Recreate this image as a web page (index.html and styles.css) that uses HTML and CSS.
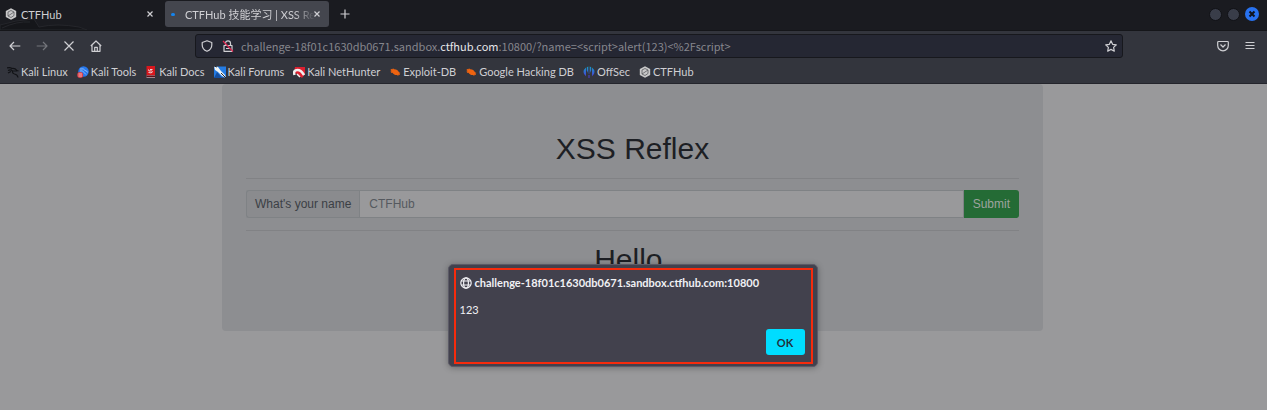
FILE: index.html
```html
<!DOCTYPE html>
<html lang="en">
<head>
    <meta charset="UTF-8">
    <meta name="viewport" content="width=device-width, initial-scale=1.0">
    <title>CTFHub 技能学习 | XSS Reflex</title>
    <link rel="stylesheet" href="styles.css">
</head>
<body>
    <svg class="sprite" aria-hidden="true">
        <symbol id="close" viewBox="0 0 12 12"><path d="M3.500 3.500l5 5M8.500 3.500l-5 5" /></symbol>
        <symbol id="hub" viewBox="0 0 12 12">
            <path d="M6 .2l5.200 2.700v6.200L6 11.800.8 9.100V2.900z" fill="#c9c9c9" />
            <path d="M3 4l3-1.500 3 1.500v3.500L6 9.500 3 8zM3 8l6-4" fill="none" stroke="#5b5c60" stroke-width=".8" />
        </symbol>
        <symbol id="bug" viewBox="0 0 12 12">
            <path d="M1.500 3l2 .3.5-1 1 1c2-.3 4 1 5 3l1.500.8-1 .5.5 1.500-1.500-.4-.3 1.200-1.200-.8C6 9.200 4.500 8.200 3.500 6.800L1.800 7l.7-1.200L1 5l1.300-.5z" fill="#ee6310" />
        </symbol>
    </svg>

    <header class="browser">
        <div class="tab-bar">
            <svg class="dragon" viewBox="0 0 120 12"><path d="M0 7Q15 2 34 1l5 8q18-4 40 0l8 3H0zM2 10q15-7 28-6" /></svg>
            <div class="tab">
                <svg class="icon"><use href="#hub" /></svg>
                <span class="tab-title">CTFHub</span>
                <button class="tab-close" aria-label="Close tab"><svg class="icon line"><use href="#close" /></svg></button>
            </div>
            <div class="tab active">
                <span class="loading"></span>
                <span class="tab-title fade">CTFHub 技能学习 | XSS Re</span>
                <button class="tab-close" aria-label="Close tab"><svg class="icon line"><use href="#close" /></svg></button>
            </div>
            <button class="new-tab" aria-label="New tab"><svg class="icon line" viewBox="0 0 12 12"><path d="M6 1.500v9M1.500 6h9" /></svg></button>
            <div class="window-buttons">
                <button class="win" aria-label="Minimize"></button>
                <button class="win" aria-label="Maximize"></button>
                <button class="win win-close" aria-label="Close"><svg viewBox="0 0 14 14"><path d="M4.500 4.500l5 5M9.500 4.500l-5 5" /></svg></button>
            </div>
        </div>

        <div class="nav-bar">
            <div class="nav-buttons">
                <button aria-label="Back"><svg class="icon line" viewBox="0 0 12 12"><path d="M11.300 6H1M5 2L1 6l4 4" /></svg></button>
                <button class="disabled" aria-label="Forward"><svg class="icon line" viewBox="0 0 12 12"><path d="M.7 6H11M7 2l4 4-4 4" /></svg></button>
                <button aria-label="Stop"><svg class="icon line" viewBox="0 0 12 12"><path d="M1.500 1.500l9 9M10.500 1.500l-9 9" /></svg></button>
                <button aria-label="Home"><svg class="icon line" viewBox="0 0 12 12"><path d="M.8 6L6 1l5.200 5M2 5v6.300h8V5M4.700 11V7.300h2.600V11" /></svg></button>
            </div>
            <div class="url-bar">
                <svg class="icon line" viewBox="0 0 12 12"><path d="M6 .8l4.800 1.700v2.500c0 3-2 5.200-4.800 6.300C3.200 10.200 1.200 8 1.200 5V2.500z" /></svg>
                <svg class="icon line lock" viewBox="0 0 12 12"><path d="M2 5.500h8v5.800H2zM3.500 5V3.300a2.500 2.500 0 0 1 5 0V5M4 8.500h4" /><path class="slash" d="M1 1l10 10.500" /></svg>
                <span class="url">challenge-18f01c1630db0671.sandbox.<b>ctfhub.com</b>:10800/?name=&lt;script&gt;alert(123)&lt;%2Fscript&gt;</span>
                <button aria-label="Bookmark"><svg class="icon line" viewBox="0 0 12 12"><path d="M6 .8l1.600 3.500 3.700.5-2.700 2.600.7 3.800L6 9.400l-3.300 1.800.7-3.800L.7 4.800l3.700-.5z" /></svg></button>
            </div>
            <div class="nav-menu">
                <button aria-label="Pocket"><svg class="icon line" viewBox="0 0 12 12"><path d="M1.500 1.500h9q.8 0 .8.8V5.500a5.300 5.300 0 0 1-10.600 0V2.300q0-.8.8-.8zM3.500 4.500L6 7l2.500-2.500" /></svg></button>
                <button aria-label="Menu"><svg class="icon line" viewBox="0 0 12 12"><path d="M1.500 2.500h9M1.500 5.500h9M1.500 8.500h9" /></svg></button>
            </div>
        </div>

        <nav class="bookmarks">
            <a href="#"><svg class="icon" viewBox="0 0 12 12"><path d="M0 2q3-1 5 .5 3-.5 5 2l1.500.5M1 4.500q3-1.500 4.500.5 3 0 4.500 0M5.500 5Q5 7.500 7.500 8q3 .3 3.500 3.500M1 7l3-1.500" fill="none" stroke="#111216" stroke-width="1.200" /></svg>Kali Linux</a>
            <a href="#"><svg class="icon" viewBox="0 0 12 12"><circle cx="6.500" cy="5.500" r="5.200" fill="#2678ee" /><path d="M3 3q4-1 5 1.500 2 0 2.500 2M3 5q3-1 4 1.500l2 2" fill="none" stroke="#a9ccf8" stroke-width=".8" /><circle cx="3.200" cy="9" r="3" fill="#df3e49" /><path d="M1.500 8h3.500M1.500 10h3.500" stroke="#eed" stroke-width=".7" /></svg>Kali Tools</a>
            <a href="#"><svg class="icon" viewBox="0 0 12 12"><path d="M1.500 0h8.500v9.500H1.500z" fill="#d9171d" /><path d="M1.500 9.500H10V12H1.500z" fill="#a5868e" /><path d="M1.500 10.500H10" stroke="#5c1018" /><path d="M3.500 3.500q0 2 1.500 1.500t2.500.5M3.500 6.500q3 1 4-.5M5 3.500h2.500" fill="none" stroke="#eee" stroke-width=".9" /></svg>Kali Docs</a>
            <a href="#"><svg class="icon" viewBox="0 0 12 12"><path d="M0 .5h12v11H0z" fill="#247ce4" /><path d="M0 12l3-6 5 6z" fill="#154fa0" /><path d="M0 0l4 1 3 4 4 4 1 3-4-2-4-4-3-2z" fill="#eef3f4" /><path d="M0 0l3 1M7 7l5 5" stroke="#26282f" fill="none" /></svg>Kali Forums</a>
            <a href="#"><svg class="icon" viewBox="0 0 12 12"><path d="M2 1h10v7L9 12 1 6z" fill="#dc2030" /><path d="M1.500 9Q0 4 4.500 4 8 4 11 9" fill="none" stroke="#f2eeee" stroke-width="2.500" /><path d="M4 8l3 3" fill="none" stroke="#f2eeee" stroke-width="1.500" /></svg>Kali NetHunter</a>
            <a href="#"><svg class="icon"><use href="#bug" /></svg>Exploit-DB</a>
            <a href="#"><svg class="icon"><use href="#bug" /></svg>Google Hacking DB</a>
            <a href="#"><svg class="icon" viewBox="0 0 12 12"><defs><linearGradient id="off" x2="0" y2="1"><stop stop-color="#159cc7" /><stop offset="1" stop-color="#5131d5" /></linearGradient></defs><path d="M5.300.5v8Q5 6 3.800 4.500V1.200zM6.700.5v8Q7 6 8.200 4.500V1.200zM3 1.500v8.700Q.5 8.500.5 6T3 1.500zM9 1.500v8.700Q11.500 8.500 11.500 6T9 1.500zM5.500 9h1v3h-1z" fill="url(#off)" /></svg>OffSec</a>
            <a href="#"><svg class="icon"><use href="#hub" /></svg>CTFHub</a>
        </nav>
    </header>

    <main class="page">
        <div class="jumbotron">
            <h1>XSS Reflex</h1>
            <hr>
            <form class="input-group">
                <label for="name">What's your name</label>
                <input type="text" id="name" name="name" placeholder="CTFHub">
                <button type="submit">Submit</button>
            </form>
            <hr>
            <h1>Hello,</h1>
        </div>
    </main>

    <div class="alert" role="alertdialog" aria-labelledby="alert-host">
        <div class="alert-box">
            <div class="alert-host">
                <svg class="icon line" viewBox="0 0 12 12"><circle cx="6" cy="6" r="5.200" /><ellipse cx="6" cy="6" rx="2.400" ry="5.200" /><path d="M1.200 4h9.600M1.200 8h9.600" /></svg>
                <span id="alert-host">challenge-18f01c1630db0671.sandbox.ctfhub.com:10800</span>
            </div>
            <p>123</p>
            <button>OK</button>
        </div>
    </div>
</body>
</html>
```
FILE: styles.css
```css
* {
    box-sizing: border-box;
}
body {
    margin: 0;
    min-height: 100vh;
    background: #99999b;
    font-family: Lato, "Noto Sans CJK SC", sans-serif;
    font-size: 11px;
    overflow: hidden;
}
button {
    padding: 0;
    border: none;
    background: none;
    color: inherit;
    font: inherit;
}
.sprite {
    display: none;
}
.icon {
    display: block;
    flex: none;
    width: 12px;
    height: 12px;
}
.line {
    fill: none;
    stroke: currentColor;
    stroke-width: 1.2;
    stroke-linejoin: round;
}

/* browser */
.browser {
    color: #cfcfd3;
    background: #33353d;
    border-bottom: 1px solid #24252c;
}
.tab-bar {
    position: relative;
    display: flex;
    align-items: center;
    height: 31px;
    padding-bottom: 2px;
    background: #1a1b20;
    border-bottom: 1px solid #15161a;
}
.dragon {
    position: absolute;
    left: 0;
    bottom: 0;
    width: 120px;
    height: 12px;
    fill: #15161a;
    stroke: #25262b;
}
.tab {
    position: relative;
    display: flex;
    align-items: center;
    gap: 4px;
    width: 165px;
    height: 26px;
    padding: 0 9px 0 5px;
}
.tab.active {
    width: 164px;
    padding: 0 6px;
    border-radius: 3px;
    background: #44464e;
}
.tab-title {
    flex: 1;
    overflow: hidden;
    white-space: nowrap;
}
.fade {
    overflow: visible;
    margin-left: 6px;
    -webkit-mask-image: linear-gradient(to right, #000 84%, transparent);
    mask-image: linear-gradient(to right, #000 84%, transparent);
}
.tab-close {
    margin-left: -8px;
}
.loading {
    width: 6px;
    height: 3px;
    border-radius: 2px;
    background: #1584ed;
}
.new-tab {
    margin-left: 10px;
}
.window-buttons {
    display: flex;
    align-items: center;
    gap: 5px;
    margin-left: auto;
    padding-right: 8px;
}
.win {
    width: 13px;
    height: 13px;
    border: 1px solid #111216;
    border-radius: 50%;
    background: #393d49;
}
.win-close {
    width: 14px;
    height: 14px;
    border: none;
    background: #2872f0;
}
.win-close svg {
    display: block;
    stroke: #10131c;
    stroke-width: 2;
}
.nav-bar {
    display: flex;
    align-items: center;
    height: 29px;
}
.nav-buttons {
    display: flex;
    gap: 15px;
    width: 195px;
    padding-left: 9px;
}
.disabled {
    color: #73757b;
}
.url-bar {
    display: flex;
    align-items: center;
    gap: 9px;
    flex: 1;
    height: 24px;
    padding: 0 5px;
    border: 1px solid #17181d;
    border-radius: 3px;
    background: #252733;
}
.url {
    flex: 1;
    margin-left: -2px;
    white-space: nowrap;
    overflow: hidden;
    color: #85868d;
    font-family: "Noto Sans CJK SC", sans-serif;
}
.url b {
    font-weight: normal;
    color: #e6e6ea;
}
.slash {
    stroke: #df2750;
}
.nav-menu {
    display: flex;
    gap: 15px;
    width: 144px;
    padding-right: 11px;
    justify-content: flex-end;
}
.bookmarks {
    display: flex;
    gap: 9px;
    height: 23px;
    padding-left: 7px;
}
.bookmarks a {
    display: flex;
    align-items: center;
    gap: 2px;
    color: inherit;
    text-decoration: none;
    white-space: nowrap;
}

/* page */
.page {
    padding: 0 26px 0 24px;
    font-family: "Liberation Sans", Arial, sans-serif;
    font-size: 12px;
    color: #1d1f24;
}
.jumbotron {
    max-width: 821px;
    margin: 0 auto;
    padding: 47px 24px 54px;
    border-radius: 4px;
    background: #8d8e91;
}
h1 {
    margin: 0;
    font-size: 30px;
    font-weight: normal;
    line-height: 35px;
    text-align: center;
}
hr {
    margin: 12px 0 11px;
    border: none;
    border-top: 1px solid #818285;
}
.input-group {
    display: flex;
    height: 28px;
}
.input-group label {
    padding: 0 8px;
    border: 1px solid #7f8285;
    border-right: none;
    border-radius: 3px 0 0 3px;
    background: #8a8b8e;
    color: #3b3f45;
    line-height: 26px;
}
.input-group input {
    flex: 1;
    min-width: 0;
    padding: 0 9px;
    border: 1px solid #7f8285;
    border-radius: 0;
    background: #99999b;
    font: inherit;
}
.input-group input::placeholder {
    color: #55595f;
}
.input-group button {
    padding: 0 9px;
    border-radius: 0 3px 3px 0;
    background: #246b35;
    color: #9ea39f;
}

/* alert dialog */
.alert {
    position: absolute;
    top: 264px;
    left: 50%;
    width: 370px;
    margin-left: -186px;
    padding: 3px 4px 2px 5px;
    border: 1px solid #5b5a66;
    border-radius: 5px;
    background: #42414d;
    box-shadow: 0 1px 6px rgba(0, 0, 0, 0.3);
    color: #f0f0f4;
}
.alert-box {
    display: flex;
    flex-direction: column;
    padding: 5px 6px 7px 4px;
    border: 2px solid #f62b0c;
}
.alert-host {
    display: flex;
    align-items: center;
    gap: 3px;
    font-weight: bold;
    line-height: 16px;
}
.alert p {
    margin: 11px 0;
    line-height: 16px;
}
.alert button {
    align-self: flex-end;
    width: 39px;
    height: 26px;
    border-radius: 3px;
    background: #00ddff;
    color: #20313d;
    font-weight: bold;
}
```
